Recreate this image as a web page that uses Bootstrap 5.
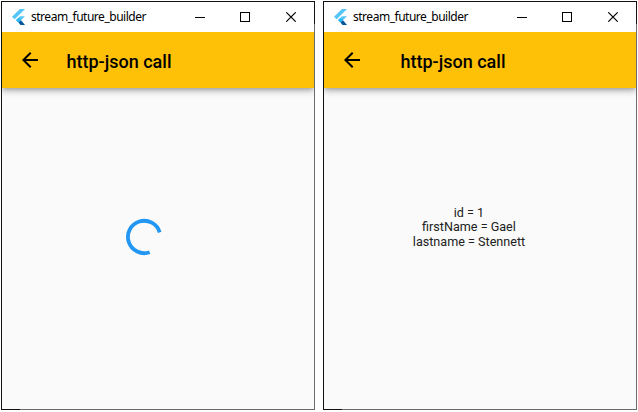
<!DOCTYPE html>
<html lang="en">
<head>
<meta charset="utf-8">
<meta name="viewport" content="width=device-width, initial-scale=1">
<title>stream_future_builder</title>
<link href="https://cdn.jsdelivr.net/npm/bootstrap@5.3.0/dist/css/bootstrap.min.css" rel="stylesheet">
<style>
body{background:#fff;font-family:Roboto,sans-serif;overflow:hidden}
.desk{padding:1px;gap:8px}
.win{width:314px;height:409px;padding:1px;
background:linear-gradient(#111,#111) 0 0/1px 100% no-repeat,linear-gradient(#111,#111) 0 0/100% 1px no-repeat,linear-gradient(#111,#111) 100% 0/1px 23px no-repeat,linear-gradient(#111,#111) 0 100%/19px 1px no-repeat,#6b6b6b}
.titlebar{height:30px;background:#fff;color:#000;padding-left:10px}
.caption{font:12px/16px "Noto Sans",sans-serif;letter-spacing:-.48px;margin-left:6px;width:150px;white-space:nowrap}
.appbar{height:56px;background:#ffc107;color:#000;padding-left:16px;box-shadow:0 2px 4px -1px rgba(0,0,0,.2),0 4px 5px rgba(0,0,0,.14),0 1px 10px rgba(0,0,0,.12);clip-path:inset(0 0 -14px 0)}
.heading{font-size:18px;line-height:24px;font-weight:500;margin:3px 0 0 24.5px}
.win-wide .heading{margin-left:36.5px}
.page{background:#fafafa;color:#212121}
.result{font-size:12.6px;line-height:14.4px;margin-top:118px;padding-right:22px}
.spinner{margin:130px 0 0 123px}
.controls{margin-left:auto;margin-right:17px}
</style>
<script src="https://cdn.jsdelivr.net/npm/bootstrap@5.3.0/dist/js/bootstrap.bundle.min.js"></script>
</head>
<body>
<svg class="d-none">
<symbol id="flutter" viewBox="0 0 13 16"><path fill="#54c5f8" d="M8 0H13L2.7 10.3 0 7.8z"/><path fill="#54c5f8" d="M8 7.2H13L9 11.1 6.5 13.6 4 11.2z"/><path fill="#29b6f6" d="M4 11.2 6.5 8.8 9 11.2 6.5 13.6z"/><path fill="#01579b" d="M6.5 13.6 9 11.2 13 16H8.5z"/></symbol>
<symbol id="back" viewBox="0 0 24 24"><path d="M20 11H7.83l5.59-5.59L12 4l-8 8 8 8 1.41-1.41L7.83 13H20z"/></symbol>
<symbol id="controls" viewBox="0 0 102 10"><g fill="none" stroke="#000"><path d="M0 5.5H10M45.5.5H54.5V9.5H45.5z" shape-rendering="crispEdges"/><path d="M91.3.3 100.7 9.7M100.7.3 91.3 9.7" stroke-width="1.1"/></g></symbol>
</svg>
<main class="desk d-flex">
<section class="win d-flex flex-column">
<header class="titlebar d-flex align-items-center"><svg width="13" height="16"><use href="#flutter"/></svg><span class="caption">stream_future_builder</span><svg class="controls" width="102" height="10"><use href="#controls"/></svg></header>
<nav class="appbar d-flex align-items-center position-relative z-1"><svg width="24" height="24"><use href="#back"/></svg><h1 class="heading">http-json call</h1></nav>
<div class="page flex-grow-1"><svg class="spinner d-block" width="38" height="38" fill="none"><path d="M34.7 14.4A16.2 16.2 0 1 0 24.7 34.2" stroke="#2196f3" stroke-width="3.8"/></svg></div>
</section>
<section class="win win-wide d-flex flex-column">
<header class="titlebar d-flex align-items-center"><svg width="13" height="16"><use href="#flutter"/></svg><span class="caption">stream_future_builder</span><svg class="controls" width="102" height="10"><use href="#controls"/></svg></header>
<nav class="appbar d-flex align-items-center position-relative z-1"><svg width="24" height="24"><use href="#back"/></svg><h1 class="heading">http-json call</h1></nav>
<div class="page flex-grow-1"><div class="result text-center">id = 1<br>firstName = Gael<br>lastname = Stennett</div></div>
</section>
</main>
</body>
</html>
